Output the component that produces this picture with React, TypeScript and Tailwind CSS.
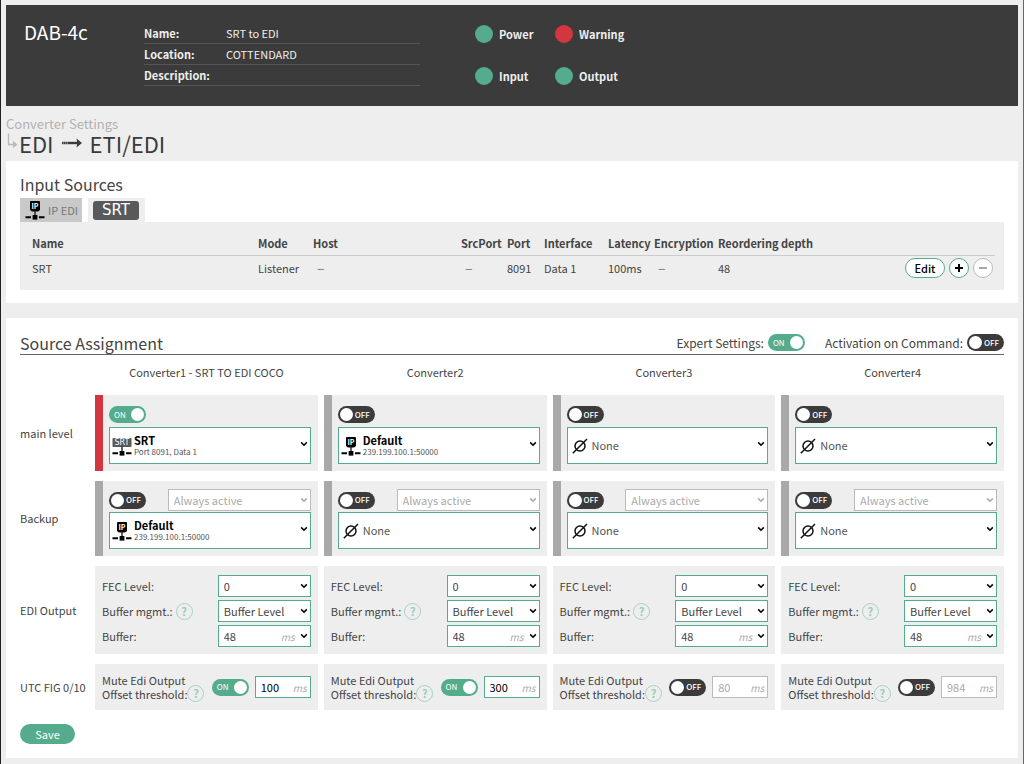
import { useId, useState } from 'react';
import type { ReactNode } from 'react';

type SourceKind = 'srt' | 'ip' | 'none';

interface Source {
  kind: SourceKind;
  name: string;
  detail?: string;
}

interface Converter {
  title: string;
  main: { on: boolean; active: boolean; source: Source };
  backup: { on: boolean; source: Source };
  mute: { on: boolean; threshold: string };
}

const NONE: Source = { kind: 'none', name: 'None' };
const SRT: Source = { kind: 'srt', name: 'SRT', detail: 'Port 8091, Data 1' };
const DEFAULT_IP: Source = { kind: 'ip', name: 'Default', detail: '239.199.100.1:50000' };
const SOURCES = [SRT, DEFAULT_IP, NONE];

const CONVERTERS: Converter[] = [
  {
    title: 'Converter1 - SRT TO EDI COCO',
    main: { on: true, active: true, source: SRT },
    backup: { on: false, source: DEFAULT_IP },
    mute: { on: true, threshold: '100' },
  },
  {
    title: 'Converter2',
    main: { on: false, active: false, source: DEFAULT_IP },
    backup: { on: false, source: NONE },
    mute: { on: true, threshold: '300' },
  },
  {
    title: 'Converter3',
    main: { on: false, active: false, source: NONE },
    backup: { on: false, source: NONE },
    mute: { on: false, threshold: '80' },
  },
  {
    title: 'Converter4',
    main: { on: false, active: false, source: NONE },
    backup: { on: false, source: NONE },
    mute: { on: false, threshold: '984' },
  },
];

/* ── Icons ─────────────────────────────────────────────────────────────── */

function Chevron({ className }: { className: string }) {
  return (
    <svg className={className} width="8" height="6" viewBox="0 0 8 6" fill="none" aria-hidden="true">
      <path d="M1.2 1.4 4 4.2l2.8-2.8" stroke="currentColor" strokeWidth="1.6" />
    </svg>
  );
}

function NetworkIcon({ kind }: { kind: 'ip' | 'srt' }) {
  return (
    <svg className="shrink-0" width="20" height="20" viewBox="0 0 20 20" aria-hidden="true">
      {kind === 'ip' ? (
        <>
          <path d="M6 1h8a1 1 0 0 1 1 1v8l-2 1.500H7L5 10V2a1 1 0 0 1 1-1Z" fill="#000" />
          <text x="10" y="8.700" textAnchor="middle" fontSize="7" fontWeight="700" fill="#fff">
            IP
          </text>
        </>
      ) : (
        <>
          <rect x="0.500" y="2" width="19" height="9" rx="1" fill="#58595b" />
          <text
            x="10"
            y="9.300"
            textAnchor="middle"
            fontSize="8"
            fontFamily="DejaVu Sans, sans-serif"
            fill="#fff"
          >
            SRT
          </text>
        </>
      )}
      <path d="M10 10.500v5" stroke="#222" strokeWidth="1.400" />
      <path d="M0.500 17.300h5.500M14 17.300h5.500" stroke="#000" strokeWidth="2" />
      <rect x="7.600" y="15" width="4.800" height="4.600" fill="#000" />
    </svg>
  );
}

function NoneIcon() {
  return (
    <svg width="16" height="16" viewBox="0 0 16 16" fill="none" stroke="#111" strokeWidth="1.500" aria-hidden="true">
      <circle cx="8" cy="8" r="5" />
      <path d="M0.800 15.200 15 1" />
    </svg>
  );
}

function SourceIcon({ kind }: { kind: SourceKind }) {
  return kind === 'none' ? <NoneIcon /> : <NetworkIcon kind={kind} />;
}

/* ── Controls ──────────────────────────────────────────────────────────── */

function Toggle({ label, defaultOn }: { label: string; defaultOn: boolean }) {
  const [on, setOn] = useState(defaultOn);

  return (
    <label
      className={`relative flex h-[17px] w-[37px] shrink-0 items-center justify-between rounded-full p-[2px] text-[8px] leading-none text-white ${
        on ? 'bg-[#54ac8d]' : 'flex-row-reverse bg-[#3b3b3b] font-medium'
      }`}
    >
      <input
        type="checkbox"
        role="switch"
        aria-label={label}
        checked={on}
        onChange={e => setOn(e.target.checked)}
        className="absolute inset-0 cursor-pointer opacity-0"
      />
      <span className={on ? 'pl-[3px]' : 'pr-[3px]'}>{on ? 'ON' : 'OFF'}</span>
      <span className="size-[13px] rounded-full bg-white" />
    </label>
  );
}

function SourceSelect({ label, initial }: { label: string; initial: Source }) {
  const [source, setSource] = useState(initial);

  return (
    <div className="relative h-[37px] text-black">
      <select
        aria-label={label}
        value={source.name}
        onChange={e => setSource(SOURCES.find(s => s.name === e.target.value) ?? NONE)}
        className={`h-full w-full appearance-none border border-[#54ac8d] bg-white pr-5 pl-[24px] text-[11px] ${
          source.detail ? 'pb-[10px] font-bold text-black' : 'text-[#555]'
        }`}
      >
        {SOURCES.map(s => (
          <option key={s.name}>{s.name}</option>
        ))}
      </select>
      <span className="pointer-events-none absolute inset-y-0 left-[3px] flex w-5 items-center justify-center">
        <SourceIcon kind={source.kind} />
      </span>
      {source.detail && (
        <span className="pointer-events-none absolute bottom-[6px] left-[25px] text-[8px] leading-[12px] text-[#555]">
          {source.detail}
        </span>
      )}
      <Chevron className="pointer-events-none absolute top-[14px] right-[3px]" />
    </div>
  );
}

interface SelectProps {
  id?: string;
  label?: string;
  options: string[];
  unit?: string;
  disabled?: boolean;
}

function Select({ id, label, options, unit, disabled }: SelectProps) {
  return (
    <div className={`relative h-[22px] ${disabled ? 'text-[#aaa]' : 'text-black'}`}>
      <select
        id={id}
        aria-label={label}
        disabled={disabled}
        className={`h-full w-full appearance-none border bg-white pr-4 pl-[5px] text-[11px] opacity-100 ${
          disabled ? 'border-[#bbb] text-[#aaa]' : 'border-[#54ac8d] text-[#444]'
        }`}
      >
        {options.map(o => (
          <option key={o}>{o}</option>
        ))}
      </select>
      {unit && (
        <span className="pointer-events-none absolute inset-y-0 right-4 flex items-center text-[10px] text-[#aaa] italic">
          {unit}
        </span>
      )}
      <Chevron className="pointer-events-none absolute top-2 right-[3px]" />
    </div>
  );
}

function HelpButton({ topic }: { topic: string }) {
  return (
    <button
      type="button"
      aria-label={`Help: ${topic}`}
      className="flex size-[17px] shrink-0 items-center justify-center rounded-full border border-[#a5d3c3] text-[11px] leading-none font-bold text-[#9accba]"
    >
      ?
    </button>
  );
}

/* ── Header ────────────────────────────────────────────────────────────── */

function StatusLight({ label, ok }: { label: string; ok: boolean }) {
  return (
    <div className="flex items-center gap-[6px] text-[11px] leading-[18px] font-bold">
      <span className={`size-[18px] rounded-full ${ok ? 'bg-[#54ac8d]' : 'bg-[#d4363f]'}`} />
      {label}
    </div>
  );
}

function DeviceHeader() {
  const info = [
    ['Name:', 'SRT to EDI'],
    ['Location:', 'COTTENDARD'],
    ['Description:', ''],
  ];

  return (
    <header className="flex h-[101px] items-start bg-[#3b3b3b] px-[18px] pt-[15px] text-[#eee]">
      <h1 className="w-[120px] text-[19px] leading-[24px] text-white">DAB-4c</h1>
      <dl className="w-[276px] pt-[3px] text-[11px] leading-[20px]">
        {info.map(([term, value]) => (
          <div key={term} className="flex h-[21px] border-b border-[#555]">
            <dt className="w-[82px] font-bold">{term}</dt>
            <dd>{value}</dd>
          </div>
        ))}
      </dl>
      <div className="ml-[55px] grid grid-cols-[80px_80px] gap-y-6 pt-[5px]">
        <StatusLight label="Power" ok />
        <StatusLight label="Warning" ok={false} />
        <StatusLight label="Input" ok />
        <StatusLight label="Output" ok />
      </div>
    </header>
  );
}

function Breadcrumb() {
  return (
    <div className="h-[55px] pt-[11px]">
      <p className="text-[13px] leading-[14px] text-[#b2b2b2]">Converter Settings</p>
      <h2 className="flex text-[22px] leading-[24px] text-[#3b3b3b]">
        <svg className="mt-[2px] mr-[1px] shrink-0" width="12" height="16" viewBox="0 0 12 16" fill="none" stroke="#b8b8b8" aria-hidden="true">
          <path d="M2.500 0.500v11h6" strokeWidth="1.300" />
          <path d="M7 8l4.500 3.500L7 15Z" fill="#b8b8b8" stroke="none" />
        </svg>
        EDI
        <svg className="mx-[8px] mt-[6px]" width="20" height="12" viewBox="0 0 20 12" fill="none" aria-label="to">
          <path d="M0 6h7" stroke="#3b3b3b" strokeWidth="2.400" strokeDasharray="1.500 .4" />
          <path d="M7 6h9" stroke="#3b3b3b" strokeWidth="2.400" />
          <path d="M14.500 1.500 20 6l-5.500 4.500.8-4.500Z" fill="#3b3b3b" />
        </svg>
        ETI/EDI
      </h2>
    </div>
  );
}

/* ── Input sources ─────────────────────────────────────────────────────── */

const HEADINGS = ['Name', 'Mode', 'Host', 'SrcPort', 'Port', 'Interface', 'Latency', 'Encryption', 'Reordering depth'];

function Dash() {
  return <span className="pl-1 text-[14px] leading-none font-medium text-[#888]">–</span>;
}

function InputSources() {
  const row: ReactNode[] = ['SRT', 'Listener', <Dash />, <Dash />, '8091', 'Data 1', '100ms', <Dash />, '48'];

  return (
    <section className="bg-white px-[14px] pt-3 pb-[13px]">
      <h3 className="text-[16px] leading-[22px]">Input Sources</h3>
      <div role="tablist" className="mt-[3px] flex h-6 gap-[6px]">
        <button
          type="button"
          role="tab"
          aria-selected="false"
          className="flex w-[62px] items-center gap-[3px] bg-[#c9c9c9] pl-[5px] text-[11px] whitespace-nowrap text-[#777]"
        >
          <NetworkIcon kind="ip" />
          IP EDI
        </button>
        <button type="button" role="tab" aria-selected="true" className="flex w-[57px] items-center bg-[#eee] pl-[5px]">
          <span className="h-[19px] w-[46px] rounded-[3px] bg-[#58595b] font-['DejaVu_Sans',sans-serif] text-[15px] leading-[19px] text-white">
            SRT
          </span>
        </button>
      </div>
      <div className="bg-[#eee] px-[9px] pt-[11px] pb-3">
        <table className="w-full table-fixed text-left text-[11px] leading-[20px]">
          <colgroup>
            <col className="w-[226px]" />
            <col className="w-[55px]" />
            <col className="w-[148px]" />
            <col className="w-[46px]" />
            <col className="w-[37px]" />
            <col className="w-[64px]" />
            <col className="w-[46px]" />
            <col className="w-[64px]" />
            <col />
            <col className="w-[90px]" />
          </colgroup>
          <thead>
            <tr className="border-b border-[#ccc]">
              {HEADINGS.map(h => (
                <th key={h} scope="col" className="pb-[2px] pl-[3px] whitespace-nowrap">
                  {h}
                </th>
              ))}
              <th aria-label="Actions" />
            </tr>
          </thead>
          <tbody>
            <tr>
              {row.map((cell, i) => (
                <td key={HEADINGS[i]} className="pt-[2px] pl-[3px]">
                  {cell}
                </td>
              ))}
              <td className="pt-[2px]">
                <div className="flex gap-1">
                  <button
                    type="button"
                    className="h-5 w-10 rounded-full border border-[#54ac8d] bg-white text-[11px] leading-[18px] font-medium text-black"
                  >
                    Edit
                  </button>
                  <button
                    type="button"
                    aria-label="Add source"
                    className="flex size-5 items-center justify-center rounded-full border border-[#54ac8d] bg-white"
                  >
                    <svg width="8" height="8" viewBox="0 0 8 8" stroke="#000" strokeWidth="2">
                      <path d="M4 0v8M0 4h8" />
                    </svg>
                  </button>
                  <button
                    type="button"
                    aria-label="Remove source"
                    className="flex size-5 items-center justify-center rounded-full border border-[#bbb] bg-white"
                  >
                    <svg width="8" height="8" viewBox="0 0 8 8" stroke="#888" strokeWidth="1.500">
                      <path d="M0 4h8" />
                    </svg>
                  </button>
                </div>
              </td>
            </tr>
          </tbody>
        </table>
      </div>
    </section>
  );
}

/* ── Source assignment ─────────────────────────────────────────────────── */

function LevelCell({ active, children }: { active?: boolean; children: ReactNode }) {
  return (
    <div className={`border-l-8 bg-[#eee] pr-[7px] pb-[7px] pl-[6px] ${active ? 'border-[#d4363f]' : 'border-[#a9a9a9]'}`}>
      {children}
    </div>
  );
}

function EdiOutput() {
  const id = useId();

  return (
    <div className="grid h-[88px] grid-cols-[1fr_93px] content-start items-center gap-y-[3px] bg-[#eee] pt-[9px] pr-[7px] pl-[7px]">
      <label htmlFor={`${id}-fec`}>FEC Level:</label>
      <Select id={`${id}-fec`} options={['0', '1', '2', '3', '4', '5']} />
      <div className="flex items-center gap-[3px]">
        <label htmlFor={`${id}-mgmt`}>Buffer mgmt.:</label>
        <HelpButton topic="Buffer management" />
      </div>
      <Select id={`${id}-mgmt`} options={['Buffer Level', 'Timestamp']} />
      <label htmlFor={`${id}-buffer`}>Buffer:</label>
      <Select id={`${id}-buffer`} options={['48', '96', '192']} unit="ms" />
    </div>
  );
}

function MuteOutput({ title, on, threshold }: { title: string; on: boolean; threshold: string }) {
  const id = useId();

  return (
    <div className="flex h-[46px] items-center bg-[#eee] pr-[7px] pl-[7px]">
      <label htmlFor={id} className="leading-[14px] whitespace-nowrap">
        Mute Edi Output
        <br />
        Offset threshold:
      </label>
      <div className="mt-3">
        <HelpButton topic="Offset threshold" />
      </div>
      <div className="ml-auto flex items-center gap-[6px]">
        <Toggle label={`Mute EDI output, ${title}`} defaultOn={on} />
        <div className="relative">
          <input
            id={id}
            type="text"
            defaultValue={threshold}
            disabled={!on}
            className={`block h-[22px] w-14 border bg-white pr-5 pl-[5px] text-[11px] ${
              on ? 'border-[#54ac8d] text-black' : 'border-[#bbb] text-[#aaa]'
            }`}
          />
          <span className="pointer-events-none absolute inset-y-0 right-1 flex items-center text-[10px] text-[#aaa] italic">
            ms
          </span>
        </div>
      </div>
    </div>
  );
}

function SourceAssignment() {
  return (
    <section className="mt-[15px] bg-white px-[14px] pt-[13px] pb-[14px]">
      <div className="flex h-6 items-center border-b border-[#666]">
        <h3 className="mr-auto text-[16px] leading-[22px]">Source Assignment</h3>
        <div className="flex items-center gap-1 text-[12px]">
          <span>Expert Settings:</span>
          <Toggle label="Expert Settings" defaultOn />
        </div>
        <div className="ml-[20px] flex items-center gap-1 text-[12px]">
          <span>Activation on Command:</span>
          <Toggle label="Activation on Command" defaultOn={false} />
        </div>
      </div>

      <div className="mt-[7px] grid grid-cols-[69px_repeat(4,minmax(0,1fr))] items-center gap-x-[6px] gap-y-[10px] text-[11px]">
        <span />
        {CONVERTERS.map(c => (
          <h4 key={c.title} className="mb-[3px] text-center leading-5">
            {c.title}
          </h4>
        ))}

        <span>main level</span>
        {CONVERTERS.map(c => (
          <LevelCell key={c.title} active={c.main.active}>
            <div className="pt-[11px] pb-1">
              <Toggle label={`Main level, ${c.title}`} defaultOn={c.main.on} />
            </div>
            <SourceSelect label={`Main source, ${c.title}`} initial={c.main.source} />
          </LevelCell>
        ))}

        <span>Backup</span>
        {CONVERTERS.map(c => (
          <LevelCell key={c.title}>
            <div className="flex items-center justify-between pt-2 pb-px">
              <Toggle label={`Backup, ${c.title}`} defaultOn={c.backup.on} />
              <div className="w-[143px]">
                <Select label={`Backup mode, ${c.title}`} options={['Always active']} disabled />
              </div>
            </div>
            <SourceSelect label={`Backup source, ${c.title}`} initial={c.backup.source} />
          </LevelCell>
        ))}

        <span>EDI Output</span>
        {CONVERTERS.map(c => (
          <EdiOutput key={c.title} />
        ))}

        <span className="whitespace-nowrap">UTC FIG 0/10</span>
        {CONVERTERS.map(c => (
          <MuteOutput key={c.title} title={c.title} on={c.mute.on} threshold={c.mute.threshold} />
        ))}
      </div>

      <button
        type="button"
        className="mt-[14px] block h-5 w-[55px] rounded-full bg-[#54ac8d] text-[11px] leading-5 text-white"
      >
        Save
      </button>
    </section>
  );
}

export default function App() {
  return (
    <div className="min-h-screen border-r border-l border-r-[#666] border-l-[#222] bg-[#eee] px-[5px] pt-[5px] font-['Noto_Sans_CJK_SC','Noto_Sans',sans-serif] text-[#444]">
      <DeviceHeader />
      <main>
        <Breadcrumb />
        <InputSources />
        <SourceAssignment />
      </main>
    </div>
  );
}
